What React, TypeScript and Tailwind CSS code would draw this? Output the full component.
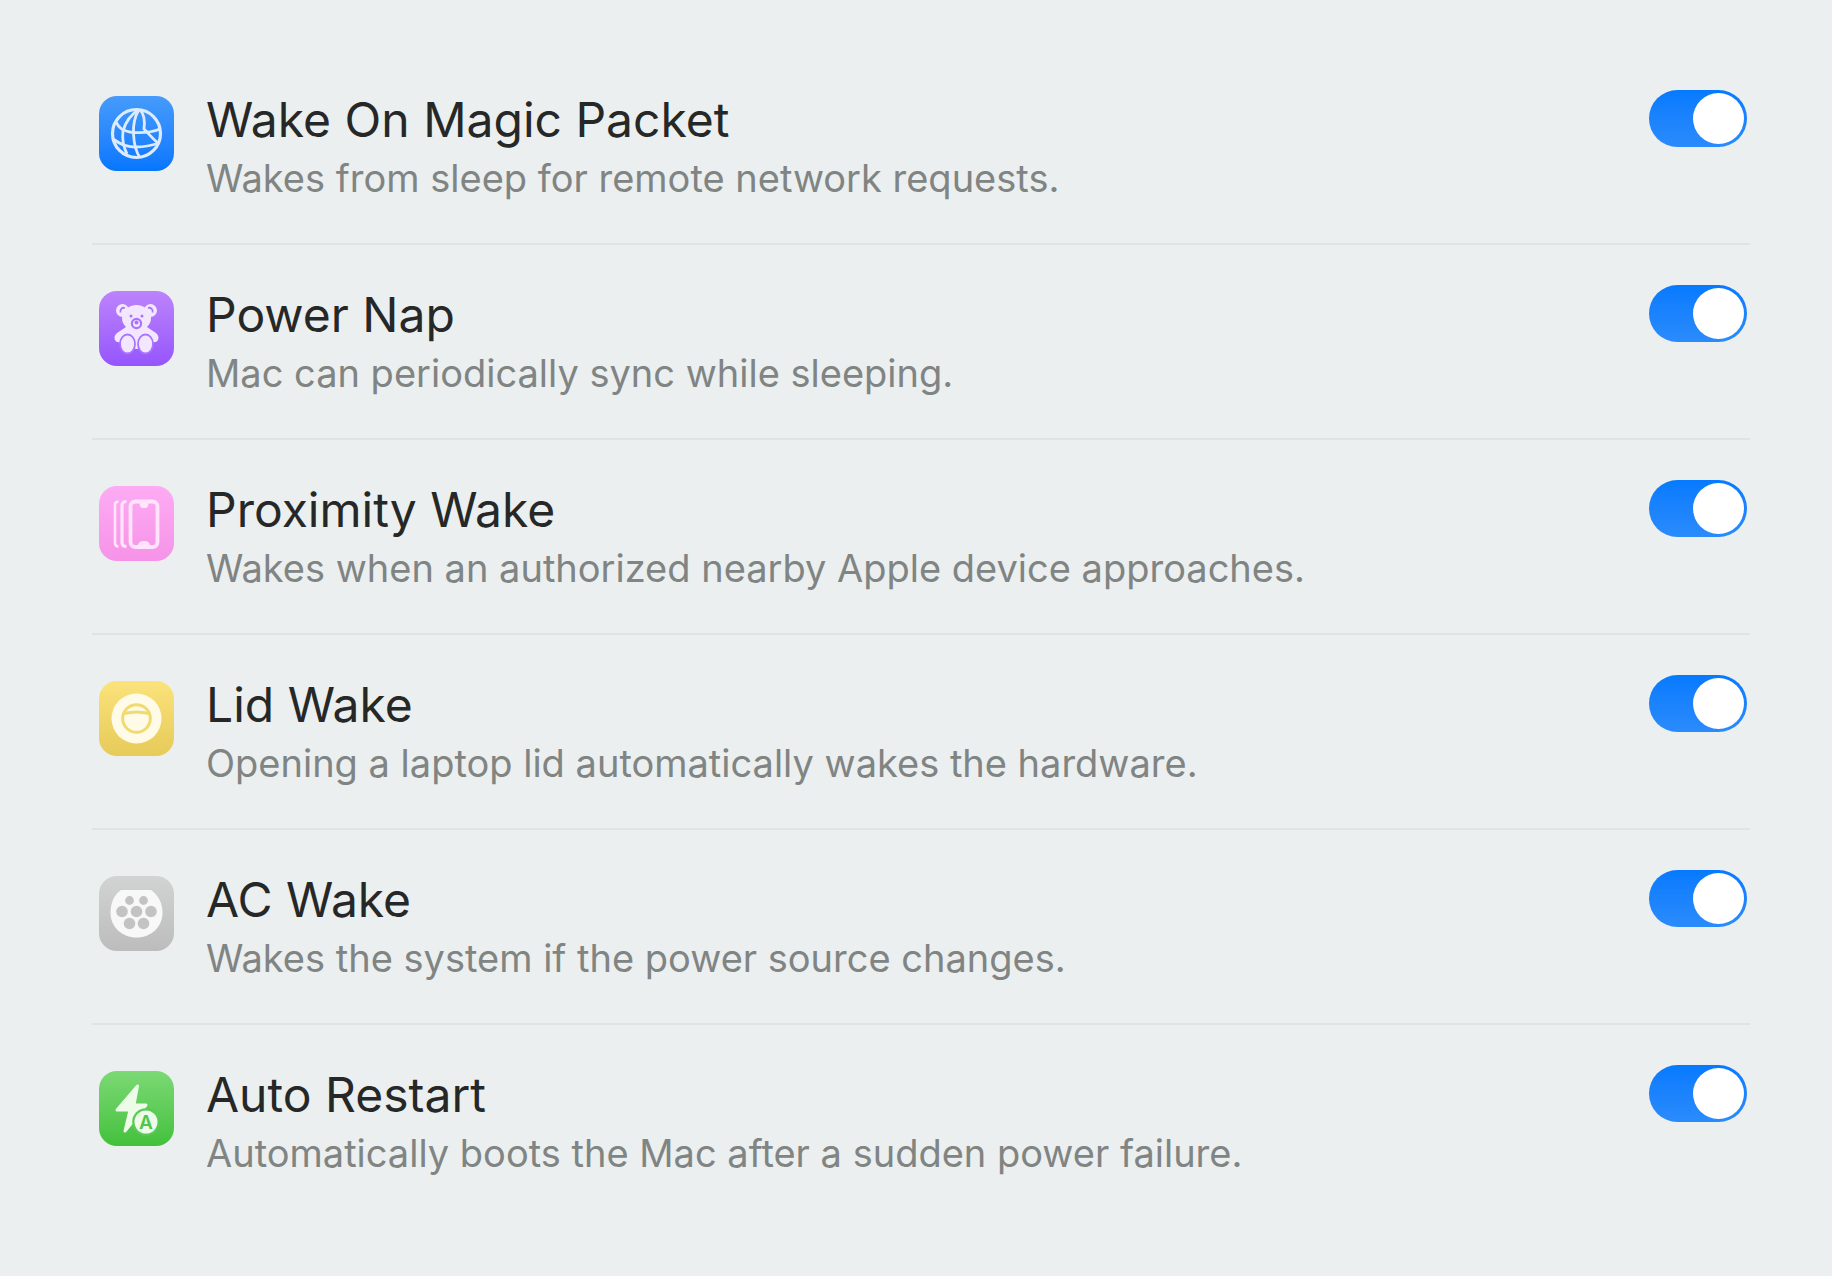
import { useState } from 'react';
import type { ReactNode } from 'react';
import { clsx } from 'clsx';

interface WakeOption {
  id: string;
  title: string;
  description: string;
  tile: string;
  icon: ReactNode;
}

function GlobeIcon() {
  return (
    <svg viewBox="0 0 75 75" className="size-full" fill="none" stroke="#dcebff" strokeWidth="2.8" aria-hidden>
      <circle cx="37.5" cy="37.5" r="24" strokeWidth="3.2" />
      <path d="M40 13.5C31 19 26 28 24 35C23 43 25 52 28 58" />
      <path d="M40 13.5C35 22 34 30 34.5 38C35 48 37 56 41 61.5" />
      <path d="M41 13.5C45 18 46 26 45 33C51 39 54 43 59 47" />
      <path d="M17 26C20 32 23 35 34 36.5C44 37 54 36 61 33" />
      <path d="M14 43C24 50 30 51 37 51C46 51 54 49 60 47" />
    </svg>
  );
}

function TeddyIcon() {
  return (
    <svg viewBox="0 0 75 75" className="size-full" aria-hidden>
      <g fill="#f3e6ff">
        <circle cx="23.5" cy="19.5" r="6.5" />
        <circle cx="51.5" cy="19.5" r="6.5" />
        <ellipse cx="37.5" cy="27" rx="14.5" ry="13" />
        <path d="M27 36L18 42C13 46 16 53 22 51L53 51C59 53 62 46 57 42L48 36Z" />
        <ellipse cx="37.5" cy="46" rx="14" ry="12" />
      </g>
      <g fill="none" stroke="#a974fb" strokeWidth="1.8">
        <path d="M21.5 21.5A3.5 3.5 0 0 1 26 17" />
        <path d="M53.5 21.5A3.5 3.5 0 0 0 49 17" />
        <circle cx="37.5" cy="32.5" r="4.6" strokeWidth="2.2" />
      </g>
      <circle cx="37.5" cy="31.5" r="2" fill="#a974fb" />
      <circle cx="32" cy="25" r="1.5" fill="#a974fb" />
      <circle cx="43" cy="25" r="1.5" fill="#a974fb" />
      <ellipse cx="28.5" cy="53" rx="7.5" ry="9.5" fill="#f3e6ff" stroke="#a974fb" strokeWidth="1.8" />
      <ellipse cx="46.5" cy="53" rx="7.5" ry="9.5" fill="#f3e6ff" stroke="#a974fb" strokeWidth="1.8" />
    </svg>
  );
}

function PhoneStackIcon() {
  return (
    <svg viewBox="0 0 75 75" className="size-full" fill="none" stroke="#ffe4fb" aria-hidden>
      <rect x="31.5" y="15.5" width="27" height="45.5" rx="5" strokeWidth="3.8" />
      <path d="M40.5 17h9c0 3-1.5 5-3 5h-3c-1.5 0-3-2-3-5z" fill="#ffe4fb" stroke="none" />
      <path d="M39 59c1-3.500 3-4 6-4s5 .5 6 4z" fill="#ffe4fb" stroke="none" />
      <path d="M27.5 15.5c-3.5 0-4.5 1.5-4.5 4v37c0 2.5 1 4 4.5 4" strokeWidth="3.2" />
      <path d="M19.5 15.5c-3 0-3.5 1.5-3.5 4v37c0 2.5.5 4 3.5 4" strokeWidth="2.6" />
    </svg>
  );
}

function LidIcon() {
  return (
    <svg viewBox="0 0 75 75" className="size-full" fill="none" aria-hidden>
      <circle cx="37.5" cy="37.5" r="25" fill="#fffbe6" />
      <circle cx="37.5" cy="37.5" r="13.8" stroke="#f0da72" strokeWidth="3" />
      <path d="M25 32.5C33 30.5 42 30.5 50 32.5" stroke="#f0da72" strokeWidth="3" />
    </svg>
  );
}

function ConnectorIcon() {
  return (
    <svg viewBox="0 0 75 75" className="size-full" aria-hidden>
      <path
        d="M22 14H52C59 19 63.5 27 63.5 36.5C63.5 51 52 61.5 37.5 61.5S11.5 51 11.5 36.5C11.5 27 15 19 22 14Z"
        fill="#f8f8f8"
      />
      <g fill="#c3c3c3">
        <circle cx="30.5" cy="24.5" r="4.4" />
        <circle cx="44.5" cy="24.5" r="4.4" />
        <circle cx="23" cy="35.5" r="5.8" />
        <circle cx="37.5" cy="35.5" r="5.8" />
        <circle cx="52" cy="35.5" r="5.8" />
        <circle cx="30.5" cy="47.5" r="5.8" />
        <circle cx="44.5" cy="47.5" r="5.8" />
      </g>
    </svg>
  );
}

function BoltIcon() {
  return (
    <svg viewBox="0 0 75 75" className="size-full" aria-hidden>
      <path
        d="M38.5 15L18 39H31L26 60L47 34H35Z"
        fill="#edfbe9"
        stroke="#edfbe9"
        strokeWidth="3"
        strokeLinejoin="round"
      />
      <circle cx="47" cy="51" r="13.8" fill="#5bc956" />
      <circle cx="47" cy="51" r="11.5" fill="#edfbe9" />
      <text
        x="47"
        y="58"
        textAnchor="middle"
        fontFamily="Inter, sans-serif"
        fontSize="19"
        fontWeight="600"
        fill="#4fc64a"
      >
        A
      </text>
    </svg>
  );
}

const options: WakeOption[] = [
  {
    id: 'magic-packet',
    title: 'Wake On Magic Packet',
    description: 'Wakes from sleep for remote network requests.',
    tile: 'from-[#459bfb] to-[#0376fe]',
    icon: <GlobeIcon />,
  },
  {
    id: 'power-nap',
    title: 'Power Nap',
    description: 'Mac can periodically sync while sleeping.',
    tile: 'from-[#bd83fb] to-[#9654fc]',
    icon: <TeddyIcon />,
  },
  {
    id: 'proximity',
    title: 'Proximity Wake',
    description: 'Wakes when an authorized nearby Apple device approaches.',
    tile: 'from-[#fdabf3] to-[#f693e8]',
    icon: <PhoneStackIcon />,
  },
  {
    id: 'lid',
    title: 'Lid Wake',
    description: 'Opening a laptop lid automatically wakes the hardware.',
    tile: 'from-[#fbe27a] to-[#e6cb59]',
    icon: <LidIcon />,
  },
  {
    id: 'ac',
    title: 'AC Wake',
    description: 'Wakes the system if the power source changes.',
    tile: 'from-[#d2d3d3] to-[#bcbcbc]',
    icon: <ConnectorIcon />,
  },
  {
    id: 'auto-restart',
    title: 'Auto Restart',
    description: 'Automatically boots the Mac after a sudden power failure.',
    tile: 'from-[#7bd974] to-[#41c13b]',
    icon: <BoltIcon />,
  },
];

export default function App() {
  const [enabled, setEnabled] = useState<Record<string, boolean>>(() =>
    Object.fromEntries(options.map((o) => [o.id, true]))
  );

  const toggle = (id: string) => setEnabled((prev) => ({ ...prev, [id]: !prev[id] }));

  return (
    <main className="min-h-screen bg-[#ebefef] pt-[50px] pr-[82px] pb-8 pl-[92px] font-['Inter',sans-serif]">
      <ul>
        {options.map((o) => (
          <li
            key={o.id}
            className="flex items-start border-b-2 border-[#dfe3e3] pt-10 pr-[3px] pb-[41px] pl-[7px] last:border-b-0"
          >
            <div
              className={clsx(
                'mt-[6px] mr-8 size-[75px] shrink-0 overflow-hidden rounded-[18px] bg-gradient-to-b',
                o.tile
              )}
            >
              {o.icon}
            </div>
            <div className="mt-[2px] min-w-0 flex-1">
              <label htmlFor={o.id} className="block text-[48px] leading-[56px] text-[#262828]">
                {o.title}
              </label>
              <p id={`${o.id}-description`} className="mt-[6px] text-[38px] leading-[48px] text-[#808483]">
                {o.description}
              </p>
            </div>
            <input
              id={o.id}
              type="checkbox"
              role="switch"
              aria-describedby={`${o.id}-description`}
              checked={enabled[o.id]}
              onChange={() => toggle(o.id)}
              className="flex h-[57px] w-[98px] shrink-0 cursor-pointer appearance-none items-center rounded-full bg-[#c9cdcd] px-[3px] transition-colors before:size-[51px] before:rounded-full before:bg-white checked:justify-end checked:bg-gradient-to-b checked:from-[#057aff] checked:to-[#2a8bfb]"
            />
          </li>
        ))}
      </ul>
    </main>
  );
}
